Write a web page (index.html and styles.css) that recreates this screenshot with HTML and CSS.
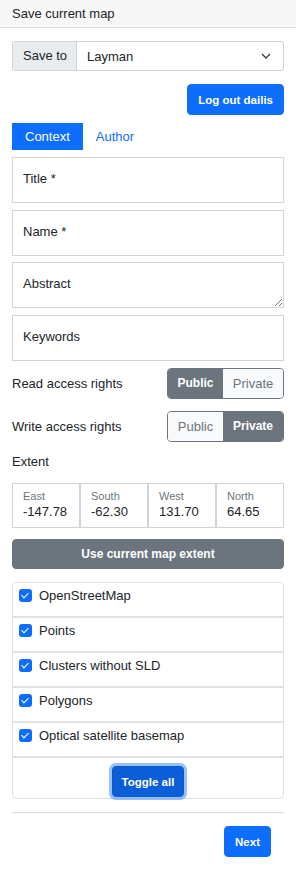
FILE: index.html
```html
<!DOCTYPE html>
<html lang="en">
<head>
    <meta charset="UTF-8">
    <meta name="viewport" content="width=device-width, initial-scale=1.0">
    <title>Save current map</title>
    <link rel="stylesheet" href="styles.css">
</head>
<body>
    <div class="head">Save current map</div>
    <div class="content">
        <div class="sel-group">
            <span class="addon">Save to</span>
            <div class="sel">
                <span>Layman</span>
                <svg width="10" height="6" viewBox="0 0 10 6"><path d="M1 1l4 4 4-4" fill="none" stroke="#343a40" stroke-width="1.3"/></svg>
            </div>
        </div>
        <div class="right">
            <button class="btn blue">Log out dailis</button>
        </div>

        <div class="tabs">
            <span class="tab active">Context</span>
            <span class="tab">Author</span>
        </div>

        <div class="field">Title *</div>
        <div class="field">Name *</div>
        <div class="field area">Abstract
            <svg class="grip" width="8" height="8" viewBox="0 0 8 8"><path d="M1 8L8 1M5 8L8 5" stroke="#777" stroke-width="1"/></svg>
        </div>
        <div class="field">Keywords</div>

        <div class="access">
            <span>Read access rights</span>
            <div class="btn-group">
                <span class="opt on pub">Public</span>
                <span class="opt priv">Private</span>
            </div>
        </div>
        <div class="access second">
            <span>Write access rights</span>
            <div class="btn-group">
                <span class="opt pub">Public</span>
                <span class="opt on priv">Private</span>
            </div>
        </div>

        <div class="extent-label">Extent</div>
        <div class="extent">
            <div class="ext-box"><div class="ext-name">East</div><div class="ext-val">-147.78</div></div>
            <div class="ext-box"><div class="ext-name">South</div><div class="ext-val">-62.30</div></div>
            <div class="ext-box"><div class="ext-name">West</div><div class="ext-val">131.70</div></div>
            <div class="ext-box"><div class="ext-name">North</div><div class="ext-val">64.65</div></div>
        </div>
        <button class="btn gray wide">Use current map extent</button>

        <ul class="layers">
            <li><span class="check"></span>OpenStreetMap</li>
            <li><span class="check"></span>Points</li>
            <li><span class="check"></span>Clusters without SLD</li>
            <li><span class="check"></span>Polygons</li>
            <li><span class="check"></span>Optical satellite basemap</li>
            <li class="toggle-row"><button class="btn blue focus">Toggle all</button></li>
        </ul>

        <hr>
        <div class="footer">
            <button class="btn blue">Next</button>
        </div>
    </div>
</body>
</html>
```
FILE: styles.css
```css
body {
    margin: 0;
    font-family: "Liberation Sans", Arial, sans-serif;
    font-size: 13px;
    color: #212529;
    background-color: #fff;
}

.head {
    height: 27px;
    line-height: 27px;
    padding-left: 12px;
    background-color: #f7f7f7;
    border-bottom: 1px solid #dcdcdc;
}

.content {
    padding: 13px 12px 0;
}

.sel-group {
    display: flex;
    height: 28px;
    border: 1px solid #ced4da;
    border-radius: 3px;
}

.addon {
    width: 53px;
    padding-left: 10px;
    line-height: 28px;
    background-color: #e9ecef;
    border-right: 1px solid #ced4da;
}

.sel {
    flex: 1;
    display: flex;
    justify-content: space-between;
    align-items: center;
    padding: 0 12px 0 10px;
}

.right {
    display: flex;
    justify-content: flex-end;
    margin-top: 13px;
}

.btn {
    font-family: "Liberation Sans", Arial, sans-serif;
    font-size: 11.5px;
    font-weight: bold;
    height: 31px;
    padding: 0 10px;
    border: 1px solid transparent;
    border-radius: 4px;
    color: #fff;
    cursor: pointer;
}

.blue {
    background-color: #0d6efd;
    border-color: #0d6efd;
}

.gray {
    background-color: #6c757d;
    border-color: #6c757d;
}

.wide {
    display: block;
    width: 100%;
    height: 30px;
    margin-top: 11px;
    font-size: 12px;
}

.tabs {
    display: flex;
    margin-top: 8px;
    height: 27px;
}

.tab {
    padding: 0 13px;
    line-height: 27px;
    color: #0d6efd;
}

.tab.active {
    background-color: #0d6efd;
    color: #fff;
}

.field {
    position: relative;
    height: 31px;
    margin-top: 7px;
    padding: 13px 10px 0;
    line-height: 16px;
    border: 1px solid #ced4da;
}

.field.area {
    margin-top: 6px;
}

.grip {
    position: absolute;
    right: 1px;
    bottom: 1px;
}

.access {
    display: flex;
    justify-content: space-between;
    align-items: center;
    margin-top: 7px;
}

.access.second {
    margin-top: 12px;
}

.btn-group {
    display: flex;
    height: 29px;
    border: 1px solid #6c757d;
    border-radius: 4px;
    overflow: hidden;
}

.opt {
    line-height: 29px;
    text-align: center;
    background-color: #f8f9fa;
    color: #6c757d;
}

.opt.pub {
    width: 55px;
}

.opt.priv {
    width: 60px;
}

.opt.on {
    background-color: #6c757d;
    color: #fff;
    font-weight: bold;
    font-size: 12px;
}

.extent-label {
    margin-top: 12px;
    line-height: 16px;
}

.extent {
    display: flex;
    margin-top: 13px;
}

.ext-box {
    flex: 1;
    height: 35px;
    padding: 6px 10px 2px;
    border: 1px solid #ced4da;
}

.ext-name {
    font-size: 11px;
    line-height: 13px;
    color: #6c757d;
}

.ext-val {
    font-size: 13px;
    line-height: 18px;
}

.layers {
    list-style: none;
    margin: 13px 0 0;
    padding: 0;
    border: 1px solid #dee2e6;
    border-radius: 4px;
}

.layers li {
    display: flex;
    align-items: flex-start;
    height: 27px;
    padding: 6px 0 0 6px;
    line-height: 14px;
    border-bottom: 2px solid #e2e2e2;
}

.layers li.toggle-row {
    justify-content: center;
    height: 32px;
    padding: 8px 0 0;
    border-bottom: none;
}

.check {
    position: relative;
    width: 13px;
    height: 13px;
    margin-right: 7px;
    border-radius: 3px;
    background-color: #0d6efd;
}

.check::after {
    content: "";
    position: absolute;
    left: 4px;
    top: 2px;
    width: 3px;
    height: 6px;
    border: solid #fff;
    border-width: 0 1.5px 1.5px 0;
    transform: rotate(45deg);
}

.focus {
    padding: 0 9px;
    background-color: #0b5ed7;
    border-color: #0a58ca;
    box-shadow: 0 0 0 3px rgba(49, 132, 253, 0.5);
}

hr {
    margin: 13px 0 0;
    border: none;
    border-top: 1px solid #dcdcdc;
}

.footer {
    display: flex;
    justify-content: flex-end;
    padding: 13px 13px 0 0;
}
```
